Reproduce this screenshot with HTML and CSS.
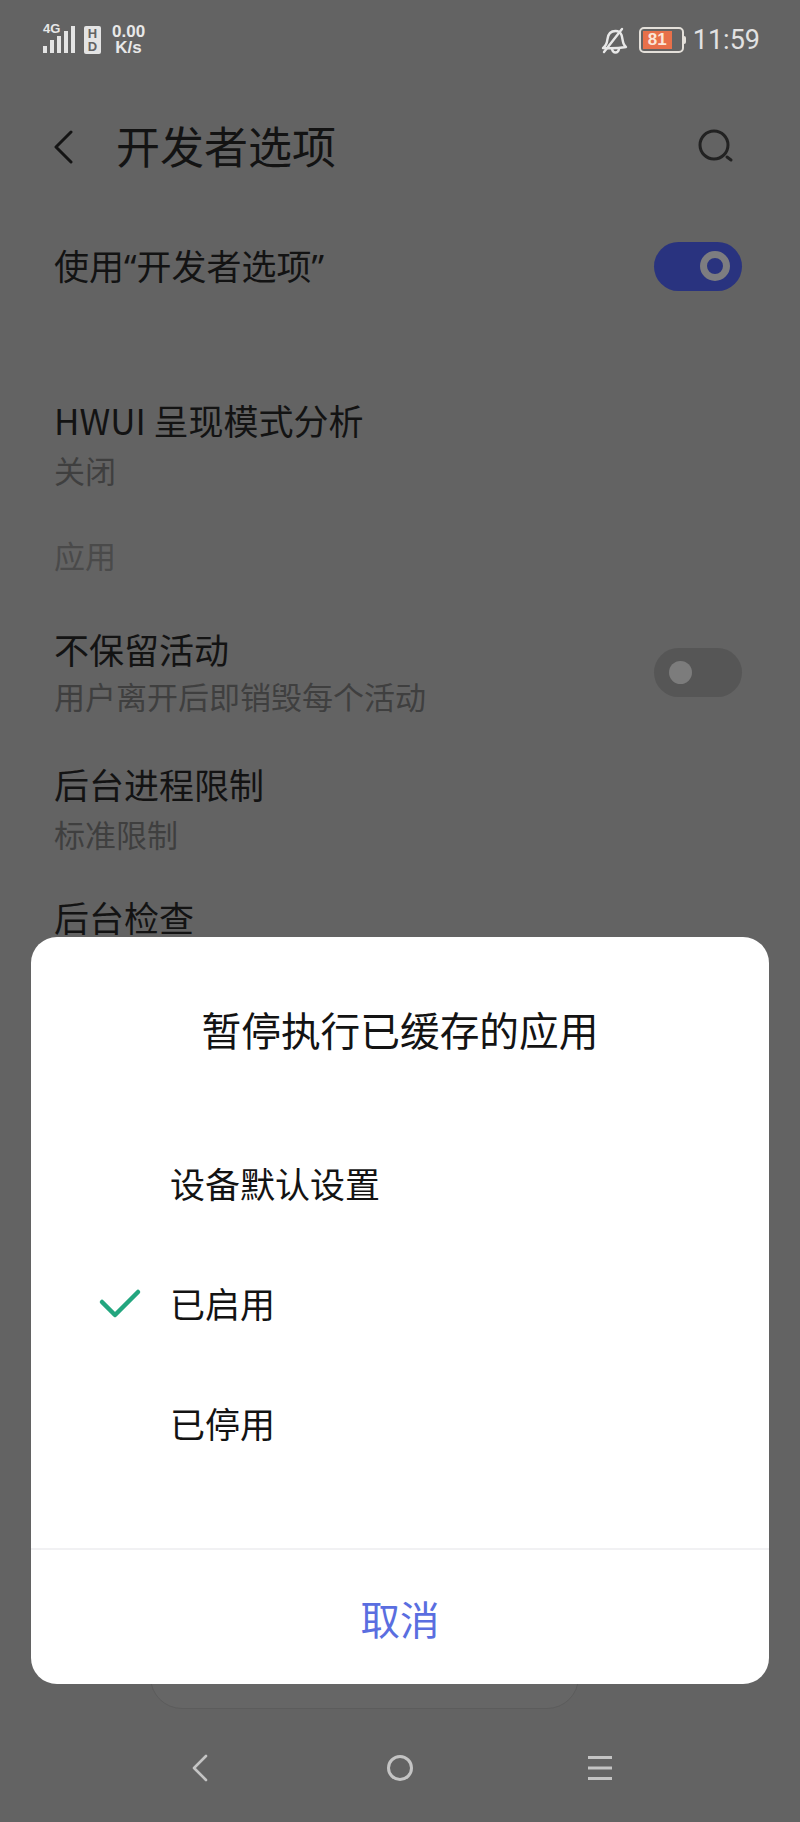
FILE: index.html
```html
<!DOCTYPE html>
<html lang="zh-CN">
<head>
  <meta charset="UTF-8" />
  <meta name="viewport" content="width=device-width, initial-scale=1.0" />
  <title>开发者选项</title>
  <link rel="stylesheet" href="styles.css">
</head>
<body>
  <div class="phone">
    <!-- 状态栏 -->
    <div class="statusbar">
      <div class="status-left">
        <div class="signal">
          <span class="signal-tag">4G</span>
          <svg class="signal-bars" width="34" height="28" viewBox="0 0 34 28">
            <g fill="#e4e4e4">
              <rect x="0" y="20" width="4" height="7" />
              <rect x="7" y="14" width="4" height="13" />
              <rect x="14" y="10" width="4" height="17" />
              <rect x="21" y="5" width="4" height="22" />
              <rect x="28" y="0" width="4" height="27" />
            </g>
          </svg>
        </div>
        <div class="hd"><span>H</span><span>D</span></div>
        <div class="speed"><span>0.00</span><span>K/s</span></div>
      </div>
      <div class="status-right">
        <svg width="28" height="28" viewBox="0 0 28 28" fill="none" stroke="#e8e8e8" stroke-width="2.400" stroke-linejoin="round" stroke-linecap="round">
          <path d="M3 22c3-2 4-5 4.500-9 .6-5 3.500-8 8-8 3 0 5 1.500 6 4 .8 2 1 6 2 8.500.6 1.500 1.500 2.500 2.500 3.500-6 1-15 1.500-23 1z" />
          <path d="M22 3L4 26" />
          <path d="M12 23c.5 2.500 2 3.500 3.500 3.500s3-1 3.500-3.500" />
        </svg>
        <div class="battery">
          <div class="battery-body"><span class="battery-level">81</span></div>
          <span class="battery-nub"></span>
        </div>
        <span class="clock">11:59</span>
      </div>
    </div>

    <!-- 标题栏 -->
    <div class="topbar">
      <svg class="back-icon" width="20" height="34" viewBox="0 0 20 34" fill="none" stroke="#141414" stroke-width="3" stroke-linecap="round" stroke-linejoin="round">
        <path d="M18 2L3 17l15 15" />
      </svg>
      <h1 class="page-title">开发者选项</h1>
      <svg class="search-icon" width="36" height="36" viewBox="0 0 36 36" fill="none" stroke="#222" stroke-width="3" stroke-linecap="round">
        <circle cx="16" cy="16" r="14" />
        <path d="M29 28l4 3" />
      </svg>
    </div>

    <!-- 设置列表 -->
    <div class="settings">
      <div class="row row-master">
        <span class="row-title">使用<span class="quote">“</span>开发者选项<span class="quote">”</span></span>
        <span class="toggle toggle-on"><span class="knob"></span></span>
      </div>

      <div class="row row-hwui">
        <div class="row-text">
          <div class="row-title">HWUI 呈现模式分析</div>
          <div class="row-sub">关闭</div>
        </div>
      </div>

      <div class="section-label">应用</div>

      <div class="row row-tight">
        <div class="row-text">
          <div class="row-title">不保留活动</div>
          <div class="row-sub">用户离开后即销毁每个活动</div>
        </div>
        <span class="toggle toggle-off"><span class="knob"></span></span>
      </div>

      <div class="row row-limit">
        <div class="row-text">
          <div class="row-title">后台进程限制</div>
          <div class="row-sub">标准限制</div>
        </div>
      </div>

      <div class="row row-check">
        <div class="row-title">后台检查</div>
      </div>
    </div>

    <!-- 导航栏 -->
    <div class="navbar">
      <svg width="40" height="40" viewBox="0 0 40 40" fill="none" stroke="#c4c4c4" stroke-width="2.600" stroke-linecap="round" stroke-linejoin="round">
        <path d="M26 8L14 20l12 12" />
      </svg>
      <svg width="40" height="40" viewBox="0 0 40 40" fill="none" stroke="#c4c4c4" stroke-width="3">
        <circle cx="20" cy="20" r="11.500" />
      </svg>
      <svg width="40" height="40" viewBox="0 0 40 40" fill="none" stroke="#c4c4c4" stroke-width="3">
        <path d="M8 9.500h24M8 20h24M8 30.500h24" />
      </svg>
    </div>

    <!-- 弹窗后面露出的卡片 -->
    <div class="ghost-card"></div>

    <!-- 弹窗 -->
    <div class="dialog">
      <div class="dialog-title">暂停执行已缓存的应用</div>
      <div class="options">
        <div class="option"><span class="option-mark"></span>设备默认设置</div>
        <div class="option">
          <span class="option-mark">
            <svg class="check-icon" width="44" height="32" viewBox="0 0 44 32" fill="none" stroke="#23a67f" stroke-width="4.500" stroke-linecap="round" stroke-linejoin="round">
              <path d="M4 14l13 13L40 4" />
            </svg>
          </span>已启用
        </div>
        <div class="option"><span class="option-mark"></span>已停用</div>
      </div>
      <div class="dialog-cancel">取消</div>
    </div>
  </div>
</body>
</html>
```

FILE: styles.css
```css
body { margin: 0; font-family: "Noto Sans CJK SC", "Noto Sans", sans-serif; color: #131313; }
.phone {
  position: relative;
  width: 800px;
  height: 1822px;
  overflow: hidden;
  background: #636363;
  display: flex;
  flex-direction: column;
}

.statusbar {
  height: 80px;
  padding: 0 40px 0 43px;
  display: flex;
  justify-content: space-between;
  align-items: center;
  flex-shrink: 0;
}
.status-left, .status-right { display: flex; align-items: center; }
.signal { position: relative; width: 34px; height: 28px; }
.signal-tag {
  position: absolute;
  left: 0;
  top: -4px;
  font: bold 13px/13px "Liberation Sans", sans-serif;
  color: #e8e8e8;
}
.signal-bars { display: block; }
.hd {
  width: 17px;
  height: 28px;
  margin-left: 7px;
  background: #e4e4e4;
  border-radius: 2px;
  color: #636363;
  font: bold 13px/13px "Liberation Sans", sans-serif;
  display: flex;
  flex-direction: column;
  align-items: center;
  justify-content: center;
}
.speed {
  margin-left: 11px;
  display: flex;
  flex-direction: column;
  align-items: center;
  color: #e8e8e8;
  font: bold 17px/16px "Liberation Sans", sans-serif;
}
.battery { display: flex; align-items: center; margin-left: 11px; }
.battery-body {
  width: 45px;
  height: 26px;
  box-sizing: border-box;
  border: 2px solid #e4e0da;
  border-radius: 5px;
  padding: 2px;
}
.battery-level {
  display: block;
  width: 29px;
  height: 18px;
  background: #e8704a;
  color: #fbe6d8;
  font: bold 17px/18px "Liberation Sans", sans-serif;
  text-align: center;
}
.battery-nub { width: 2px; height: 8px; background: #e4e0da; border-radius: 0 2px 2px 0; }
.clock { margin-left: 7px; font: 27px/32px Roboto, sans-serif; color: #e2e2e2; }

.topbar {
  height: 134px;
  padding: 0 66px 0 53px;
  display: flex;
  align-items: center;
  flex-shrink: 0;
}
.page-title { margin: -4px 0 0 43px; font-size: 44px; line-height: 60px; font-weight: 400; flex: 1; }

.settings { padding: 0 58px 0 54px; }
.row { display: flex; justify-content: space-between; align-items: center; }
.row-title { font-size: 35px; line-height: 50px; }
.quote { font-family: "Noto Sans", sans-serif; }
.row-sub { font-size: 31px; line-height: 50px; color: #3f3f3f; }
.row-master { height: 104px; }
.row-hwui { margin-top: 77px; }
.section-label { margin-top: 35px; font-size: 31px; line-height: 50px; color: #4a4a4a; }
.row-tight { margin-top: 46px; }
.row-tight .row-title, .row-tight .row-sub { line-height: 45px; }
.row-tight .row-sub { margin-top: 2px; }
.row-limit { margin-top: 41px; }
.row-check { margin-top: 33px; }

.toggle {
  width: 88px;
  height: 49px;
  border-radius: 25px;
  display: flex;
  align-items: center;
  flex-shrink: 0;
}
.toggle-on { background: #29337f; justify-content: flex-end; }
.toggle-on .knob {
  width: 30px;
  height: 30px;
  box-sizing: border-box;
  border: 7px solid #7d7d80;
  border-radius: 50%;
  margin-right: 12px;
}
.toggle-off { background: #565656; }
.toggle-off .knob {
  width: 23px;
  height: 23px;
  border-radius: 50%;
  background: #7c7c7c;
  margin-left: 15px;
}

.navbar {
  margin-top: auto;
  height: 108px;
  padding: 0 180px;
  display: flex;
  justify-content: space-between;
  align-items: center;
  flex-shrink: 0;
}

.ghost-card {
  position: absolute;
  left: 150px;
  top: 1660px;
  width: 429px;
  height: 49px;
  box-sizing: border-box;
  background: #666;
  border: 1px solid #5c5c5c;
  border-radius: 0 0 32px 32px;
}

.dialog {
  position: absolute;
  left: 31px;
  top: 937px;
  width: 738px;
  height: 747px;
  background: #fff;
  border-radius: 26px;
  display: flex;
  flex-direction: column;
}
.dialog-title {
  margin-top: 62px;
  font-size: 39.700px;
  line-height: 60px;
  text-align: center;
}
.options { margin-top: 63px; }
.option {
  height: 120px;
  padding-left: 67px;
  display: flex;
  align-items: center;
  font-size: 35px;
}
.option-mark { width: 72px; display: flex; align-items: center; flex-shrink: 0; }
.check-icon { margin-top: 4px; }
.dialog-cancel {
  margin-top: 66px;
  flex: 1;
  border-top: 2px solid #f1f1f3;
  display: flex;
  justify-content: center;
  align-items: center;
  font-size: 39.500px;
  color: #5a6ee0;
}
```
